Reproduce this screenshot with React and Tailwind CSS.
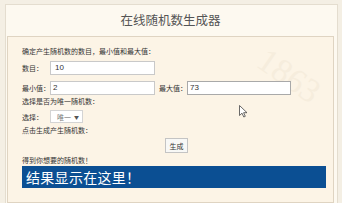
export default function App() {
  const cjk = { fontFamily: '"Noto Sans CJK SC", "Noto Sans", sans-serif' };
  return (
    <div className="relative w-[342px] h-[203px] overflow-hidden bg-[#f4efe4] pt-[4px] pl-[5px] pr-[4px] text-[#333]" style={cjk}>
      <div className="h-full border-l border-t border-r border-[#e4ddcf] bg-[#fdf9f0] pl-[1px] pr-[3px] flex flex-col">
        <div className="h-[31px] flex items-center justify-center text-[12.5px] text-[#555] tracking-[0px]">在线随机数生成器</div>
        <div className="relative flex-1 overflow-hidden border border-[#dfd4c2] bg-[#fcf4e6] pl-[14px] pr-[6px] text-[7px] leading-[10px]">
          <div className="absolute right-[10px] top-[22px] text-[34px] leading-[34px] text-[#f6eddd] font-['Liberation_Serif',serif] rotate-[35deg] select-none">1863</div>
          <div className="relative">
            <div className="pt-[9px]">确定产生随机数的数目，最小值和最大值：</div>
            <div className="mt-[5px] flex items-center">
              <span className="w-[28px]">数目：</span>
              <div className="w-[105px] h-[14px] border border-[#c9c9c9] bg-white pl-[4px] text-[8px] leading-[12px] font-['Liberation_Sans',sans-serif]">10</div>
            </div>
            <div className="mt-[6px] flex items-center">
              <span className="w-[28px]">最小值：</span>
              <div className="w-[105px] h-[14px] border border-[#c9c9c9] bg-white pl-[2px] text-[8px] leading-[12px] font-['Liberation_Sans',sans-serif]">2</div>
              <span className="ml-[4px] w-[28px]">最大值：</span>
              <div className="w-[104px] h-[14px] border border-[#a9a9a9] bg-white pl-[2px] text-[8px] leading-[12px] font-['Liberation_Sans',sans-serif]">73</div>
            </div>
            <div className="mt-[1px]">选择是否为唯一随机数：</div>
            <div className="mt-[4px] flex items-center">
              <span className="w-[28px]">选择：</span>
              <div className="w-[33px] h-[13px] border border-[#d4d4d4] bg-white flex items-center justify-between pl-[6px] pr-[3px] text-[#777]">
                <span>唯一</span>
                <span className="text-[5px] leading-[5px] text-[#555]">▼</span>
              </div>
            </div>
            <div className="mt-[2px]">点击生成产生随机数：</div>
            <div className="mt-[3px] flex justify-center pl-[4px]">
              <div className="w-[23px] h-[15px] border border-[#c4c4c4] bg-[#f8f8f6] flex items-center justify-center">生成</div>
            </div>
            <div className="mt-[2px]">得到你想要的随机数！</div>
            <div className="mt-[1px] h-[22px] w-[304px] bg-[#0b4f93] text-white text-[14px] leading-[22px] pl-[4px] tracking-[0.3px]">结果显示在这里！</div>
          </div>
        </div>
      </div>
      <svg className="absolute left-[239px] top-[105px]" width="9" height="13" viewBox="0 0 9 13">
        <path d="M0.5 0.5 L0.5 10.5 L3 8.2 L4.8 12 L6.3 11.3 L4.6 7.7 L8 7.7 Z" fill="white" stroke="#444" strokeWidth="0.8" />
      </svg>
    </div>
  );
}
